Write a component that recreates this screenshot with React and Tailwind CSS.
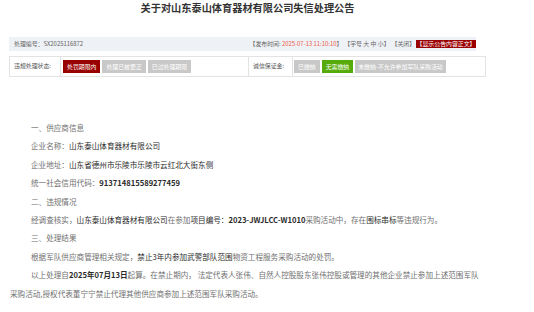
export default function App() {
  const font = { fontFamily: '"Noto Sans CJK SC", "Noto Sans", sans-serif' };
  const P = ({ children, indent = true }) => (
    <p className={`h-[18.4px] leading-[18.4px] whitespace-nowrap ${indent ? "pl-[21px]" : ""}`}>{children}</p>
  );
  const D = ({ children, b }) => (
    <span className={`text-[#2b2b2b] ${b ? "font-bold" : ""}`}>{children}</span>
  );
  return (
    <div className="w-[534px] h-[312px] bg-white overflow-hidden" style={font}>
      <div className="w-[477px] ml-[9px]">
        <h1 className="text-center text-[10.2px] leading-[16px] font-bold text-[#333]">
          关于对山东泰山体育器材有限公司失信处理公告
        </h1>
        <div className="mt-[21px] w-[467px] h-[14px] bg-[#eef1f5] flex items-center justify-between text-[5.9px] text-[#666] pl-[5px]">
          <span>处理编号：SX2025116872</span>
          <div className="flex items-center">
            <span>【发布时间: <span className="text-[#f0604c]">2025-07-13 11:10:10</span>】</span>
            <span className="ml-[2px]">【字号 大 中 小】</span>
            <span className="ml-[2px]">【关闭】</span>
            <span className="ml-[1px] bg-[#990000] text-white h-[8px] leading-[8px] px-[0.5px]">【显示公告内容正文】</span>
          </div>
        </div>
        <div className="mt-[5px] h-[21px] border border-[#e3e3e3] flex items-stretch text-[5.9px]">
          <div className="w-[51px] flex items-center pl-[4px] text-[#555] border-r border-[#e3e3e3]">违规处理状态:</div>
          <div className="flex items-center gap-[2px] pl-[2px] w-[187px] text-white">
            <span className="h-[13px] leading-[13px] px-[4px] bg-[#990000]">处罚期限内</span>
            <span className="h-[13px] leading-[13px] px-[4px] bg-[#c8c8c8]">处理已被更正</span>
            <span className="h-[13px] leading-[13px] px-[4px] bg-[#c8c8c8]">已过处理期限</span>
          </div>
          <div className="w-[45px] flex items-center pl-[4px] text-[#555] border-x border-[#e3e3e3]">诚信保证金:</div>
          <div className="flex items-center gap-[2px] pl-[1px] text-white">
            <span className="h-[13px] leading-[13px] px-[4px] bg-[#c8c8c8]">已缴纳</span>
            <span className="h-[13px] leading-[13px] px-[4px] bg-[#56ab0a]">无需缴纳</span>
            <span className="h-[13px] leading-[13px] px-[3px] bg-[#c8c8c8]">未缴纳-不允许参加军队采购活动</span>
          </div>
        </div>
        <div className="mt-[42px] text-[7.6px] text-[#707070] pl-[1px]">
          <P>一、供应商信息</P>
          <P>企业名称：<D>山东泰山体育器材有限公司</D></P>
          <P>企业地址：<D>山东省德州市乐陵市乐陵市云红北大街东侧</D></P>
          <P>统一社会信用代码：<D b>913714815589277459</D></P>
          <P>二、违规情况</P>
          <P>经调查核实，<D>山东泰山体育器材有限公司</D>在参加<D>项目编号：<b>2023-JWJLCC-W1010</b></D>采购活动中，存在<D>围标串标</D>等违规行为。</P>
          <P>三、处理结果</P>
          <P>根据军队供应商管理相关规定，<D>禁止3年内参加武警部队范围</D>物资工程服务采购活动的处罚。</P>
          <P>以上处理自<D b>2025年07月13日</D>起算。在禁止期内， 法定代表人张伟、自然人控股股东张伟控股或管理的其他企业禁止参加上述范围军队</P>
          <P indent={false}>采购活动,授权代表董宁宁禁止代理其他供应商参加上述范围军队采购活动。</P>
        </div>
      </div>
    </div>
  );
}
